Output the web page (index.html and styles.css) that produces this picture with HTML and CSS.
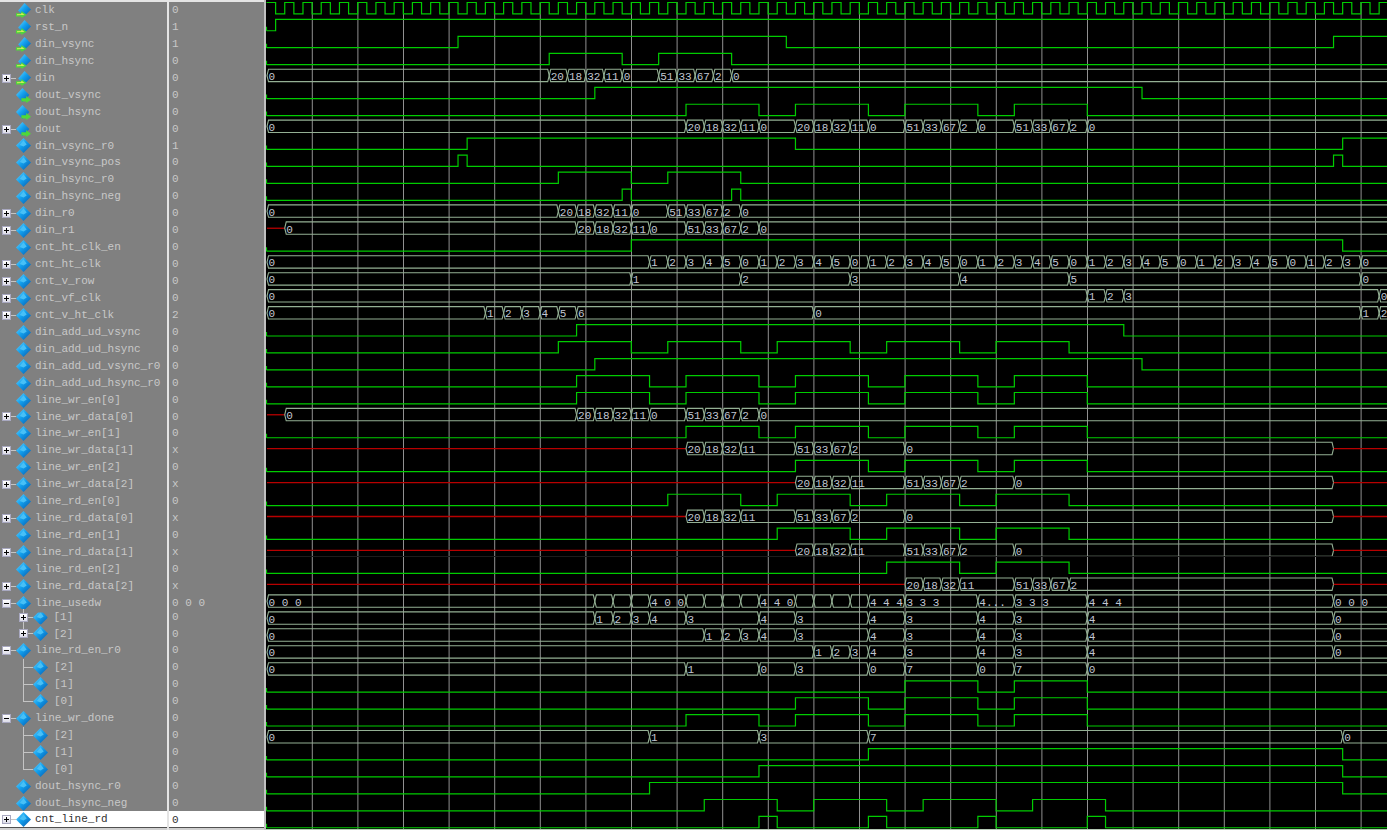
FILE: index.html
```html
<!DOCTYPE html>
<html>
<head>
  <title>Wave</title>
  <link rel="stylesheet" href="styles.css">
</head>
<body>
  <svg class="defs" width="0" height="0">
    <defs>
      <linearGradient id="blue" x1="0" y1="0" x2="1" y2="1">
        <stop offset="0" stop-color="#6fd6ff"/>
        <stop offset="0.45" stop-color="#12a0ee"/>
        <stop offset="1" stop-color="#0658ac"/>
      </linearGradient>
      <symbol id="sig" viewBox="0 0 14 14">
        <path d="M7 0 14 7 7 14 0 7Z" fill="url(#blue)"/>
        <path d="M7 2 10 6 7 8 3.5 6.5Z" fill="#48c0f6"/>
      </symbol>
      <symbol id="sig-in" viewBox="0 0 14 14">
        <path d="M8 0 14 6 7.5 12.5 2 7Z" fill="url(#blue)"/>
        <path d="M0 9.5H5V7.5L10 11 5 14V12.5H0Z" fill="#4fd83a"/>
        <path d="M1 10.5H5V9L8 11 1 11.5Z" fill="#e6f060"/>
      </symbol>
      <symbol id="sig-out" viewBox="0 0 14 14">
        <path d="M6 0 12.5 6.5 6 13 0 6.5Z" fill="url(#blue)"/>
        <path d="M5 9.5H9.5V7.5L14 11 9.5 14V12.5H5Z" fill="#4fd83a"/>
      </symbol>
    </defs>
  </svg>

  <div class="window">
    <div class="signals">
      <div class="row"><div class="name"><svg class="ico"><use href="#sig-in"/></svg><span>clk</span></div><div class="val">0</div></div>
      <div class="row"><div class="name"><svg class="ico"><use href="#sig-in"/></svg><span>rst_n</span></div><div class="val">1</div></div>
      <div class="row"><div class="name"><svg class="ico"><use href="#sig-in"/></svg><span>din_vsync</span></div><div class="val">1</div></div>
      <div class="row"><div class="name"><svg class="ico"><use href="#sig-in"/></svg><span>din_hsync</span></div><div class="val">0</div></div>
      <div class="row"><div class="name"><i class="btn"></i><i class="stem"></i><svg class="ico"><use href="#sig-in"/></svg><span>din</span></div><div class="val">0</div></div>
      <div class="row"><div class="name"><svg class="ico"><use href="#sig-out"/></svg><span>dout_vsync</span></div><div class="val">0</div></div>
      <div class="row"><div class="name"><svg class="ico"><use href="#sig-out"/></svg><span>dout_hsync</span></div><div class="val">0</div></div>
      <div class="row"><div class="name"><i class="btn"></i><i class="stem"></i><svg class="ico"><use href="#sig-out"/></svg><span>dout</span></div><div class="val">0</div></div>
      <div class="row"><div class="name"><svg class="ico"><use href="#sig"/></svg><span>din_vsync_r0</span></div><div class="val">1</div></div>
      <div class="row"><div class="name"><svg class="ico"><use href="#sig"/></svg><span>din_vsync_pos</span></div><div class="val">0</div></div>
      <div class="row"><div class="name"><svg class="ico"><use href="#sig"/></svg><span>din_hsync_r0</span></div><div class="val">0</div></div>
      <div class="row"><div class="name"><svg class="ico"><use href="#sig"/></svg><span>din_hsync_neg</span></div><div class="val">0</div></div>
      <div class="row"><div class="name"><i class="btn"></i><i class="stem"></i><svg class="ico"><use href="#sig"/></svg><span>din_r0</span></div><div class="val">0</div></div>
      <div class="row"><div class="name"><i class="btn"></i><i class="stem"></i><svg class="ico"><use href="#sig"/></svg><span>din_r1</span></div><div class="val">0</div></div>
      <div class="row"><div class="name"><svg class="ico"><use href="#sig"/></svg><span>cnt_ht_clk_en</span></div><div class="val">0</div></div>
      <div class="row"><div class="name"><i class="btn"></i><i class="stem"></i><svg class="ico"><use href="#sig"/></svg><span>cnt_ht_clk</span></div><div class="val">0</div></div>
      <div class="row"><div class="name"><i class="btn"></i><i class="stem"></i><svg class="ico"><use href="#sig"/></svg><span>cnt_v_row</span></div><div class="val">0</div></div>
      <div class="row"><div class="name"><i class="btn"></i><i class="stem"></i><svg class="ico"><use href="#sig"/></svg><span>cnt_vf_clk</span></div><div class="val">0</div></div>
      <div class="row"><div class="name"><i class="btn"></i><i class="stem"></i><svg class="ico"><use href="#sig"/></svg><span>cnt_v_ht_clk</span></div><div class="val">2</div></div>
      <div class="row"><div class="name"><svg class="ico"><use href="#sig"/></svg><span>din_add_ud_vsync</span></div><div class="val">0</div></div>
      <div class="row"><div class="name"><svg class="ico"><use href="#sig"/></svg><span>din_add_ud_hsync</span></div><div class="val">0</div></div>
      <div class="row"><div class="name"><svg class="ico"><use href="#sig"/></svg><span>din_add_ud_vsync_r0</span></div><div class="val">0</div></div>
      <div class="row"><div class="name"><svg class="ico"><use href="#sig"/></svg><span>din_add_ud_hsync_r0</span></div><div class="val">0</div></div>
      <div class="row"><div class="name"><svg class="ico"><use href="#sig"/></svg><span>line_wr_en[0]</span></div><div class="val">0</div></div>
      <div class="row"><div class="name"><i class="btn"></i><i class="stem"></i><svg class="ico"><use href="#sig"/></svg><span>line_wr_data[0]</span></div><div class="val">0</div></div>
      <div class="row"><div class="name"><svg class="ico"><use href="#sig"/></svg><span>line_wr_en[1]</span></div><div class="val">0</div></div>
      <div class="row"><div class="name"><i class="btn"></i><i class="stem"></i><svg class="ico"><use href="#sig"/></svg><span>line_wr_data[1]</span></div><div class="val">x</div></div>
      <div class="row"><div class="name"><svg class="ico"><use href="#sig"/></svg><span>line_wr_en[2]</span></div><div class="val">0</div></div>
      <div class="row"><div class="name"><i class="btn"></i><i class="stem"></i><svg class="ico"><use href="#sig"/></svg><span>line_wr_data[2]</span></div><div class="val">x</div></div>
      <div class="row"><div class="name"><svg class="ico"><use href="#sig"/></svg><span>line_rd_en[0]</span></div><div class="val">0</div></div>
      <div class="row"><div class="name"><i class="btn"></i><i class="stem"></i><svg class="ico"><use href="#sig"/></svg><span>line_rd_data[0]</span></div><div class="val">x</div></div>
      <div class="row"><div class="name"><svg class="ico"><use href="#sig"/></svg><span>line_rd_en[1]</span></div><div class="val">0</div></div>
      <div class="row"><div class="name"><i class="btn"></i><i class="stem"></i><svg class="ico"><use href="#sig"/></svg><span>line_rd_data[1]</span></div><div class="val">x</div></div>
      <div class="row"><div class="name"><svg class="ico"><use href="#sig"/></svg><span>line_rd_en[2]</span></div><div class="val">0</div></div>
      <div class="row"><div class="name"><i class="btn"></i><i class="stem"></i><svg class="ico"><use href="#sig"/></svg><span>line_rd_data[2]</span></div><div class="val">x</div></div>
      <div class="row"><div class="name"><i class="btn minus"></i><i class="stem"></i><svg class="ico"><use href="#sig"/></svg><span>line_usedw</span></div><div class="val">0 0 0</div></div>

      <div class="row shifted"><div class="name sub"><i class="tee"><i class="btn"></i></i><svg class="ico cut"><use href="#sig"/></svg><span>[1]</span></div><div class="val">0</div></div>
      <div class="row"><div class="name sub"><i class="tee end"><i class="btn"></i></i><svg class="ico"><use href="#sig"/></svg><span>[2]</span></div><div class="val">0</div></div>
      <div class="row"><div class="name"><i class="btn minus"></i><i class="stem"></i><svg class="ico"><use href="#sig"/></svg><span>line_rd_en_r0</span></div><div class="val">0</div></div>
      <div class="row"><div class="name sub"><i class="tee"></i><svg class="ico"><use href="#sig"/></svg><span>[2]</span></div><div class="val">0</div></div>
      <div class="row"><div class="name sub"><i class="tee"></i><svg class="ico"><use href="#sig"/></svg><span>[1]</span></div><div class="val">0</div></div>
      <div class="row"><div class="name sub"><i class="tee end"></i><svg class="ico"><use href="#sig"/></svg><span>[0]</span></div><div class="val">0</div></div>
      <div class="row"><div class="name"><i class="btn minus"></i><i class="stem"></i><svg class="ico"><use href="#sig"/></svg><span>line_wr_done</span></div><div class="val">0</div></div>
      <div class="row"><div class="name sub"><i class="tee"></i><svg class="ico"><use href="#sig"/></svg><span>[2]</span></div><div class="val">0</div></div>
      <div class="row"><div class="name sub"><i class="tee"></i><svg class="ico"><use href="#sig"/></svg><span>[1]</span></div><div class="val">0</div></div>
      <div class="row"><div class="name sub"><i class="tee end"></i><svg class="ico"><use href="#sig"/></svg><span>[0]</span></div><div class="val">0</div></div>
      <div class="row"><div class="name"><svg class="ico"><use href="#sig"/></svg><span>dout_hsync_r0</span></div><div class="val">0</div></div>
      <div class="row"><div class="name"><svg class="ico"><use href="#sig"/></svg><span>dout_hsync_neg</span></div><div class="val">0</div></div>
      <div class="row selected"><div class="name"><i class="btn"></i><i class="stem"></i><svg class="ico"><use href="#sig"/></svg><span>cnt_line_rd</span></div><div class="val">0</div></div>
      <div class="scrollbars"><div></div><div></div></div>
    </div>

    <div class="waves">
      <svg id="wave" width="1121" height="830"></svg>
    </div>
  </div>

  <script src="wave.js"></script>
</body>
</html>
```

FILE: styles.css
```css
html, body {
  margin: 0;
  height: 830px;
  overflow: hidden;
  background: #808080;
}
.defs {
  display: block;
  height: 0;
}
.window {
  display: flex;
  height: 830px;
}

/* left side: names and values */
.signals {
  width: 264px;
  flex: none;
  padding-top: 2px;
  background: #e4e4e4;
  overflow: hidden;
  font-family: "Liberation Mono", monospace;
  font-size: 11px;
  color: #c8c8c8;
}
.row {
  display: grid;
  grid-template-columns: 167px 95px;
  column-gap: 2px;
  height: 16.95px;
  line-height: 16.95px;
}
.row.shifted {
  margin-top: -3.2px;
}
.name, .val {
  background: #808080;
  white-space: pre;
  overflow: hidden;
}
.name {
  display: flex;
  align-items: center;
  padding-left: 15.5px;
}
.name:has(.btn) {
  padding-left: 2px;
}
.name.sub {
  padding-left: 23px;
}
.val {
  padding-left: 3px;
}
.row.selected {
  margin-top: -1px;
  height: 16.5px;
}
.selected .name, .selected .val {
  box-sizing: border-box;
  padding-top: 1px;
  background: #fff;
  color: #303030;
}
.scrollbars {
  display: grid;
  grid-template-columns: 167px 95px;
  column-gap: 2px;
  height: 4px;
}
.scrollbars div {
  background: #d0d0d0;
  border-top: 1px solid #505050;
}

.ico {
  width: 15px;
  height: 15px;
  flex: none;
  margin-right: 4.5px;
}
.sub .ico {
  margin-right: 6px;
}
.name:has(.btn) .ico {
  margin-left: -0.5px;
}
.ico.cut {
  clip-path: inset(3px 0 0 0);
}
.btn {
  display: block;
  width: 7px;
  height: 7px;
  flex: none;
  border: 1px solid #a8a8c0;
  background:
    linear-gradient(#000, #000) center / 5px 1px no-repeat,
    linear-gradient(#000, #000) center / 1px 5px no-repeat,
    linear-gradient(#fff, #dcdce8);
}
.btn.minus {
  background:
    linear-gradient(#000, #000) center / 5px 1px no-repeat,
    linear-gradient(#fff, #dcdce8);
}
.stem {
  display: block;
  width: 5px;
  height: 1px;
  flex: none;
  background: #c4c4c4;
}
.tee {
  display: flex;
  align-items: center;
  width: 10px;
  height: 100%;
  flex: none;
  background:
    linear-gradient(#c4c4c4, #c4c4c4) left top / 1px 100% no-repeat,
    linear-gradient(#c4c4c4, #c4c4c4) left center / 100% 1px no-repeat;
}
.tee.end {
  background-size: 1px 50%, 100% 1px;
}
.tee .btn {
  margin-left: -4px;
}

/* right side: the traces */
.waves {
  flex: 1;
  min-width: 0;
  background: #000;
  border-left: 2px solid #c0c0c0;
  overflow: hidden;
}
#wave {
  display: block;
}
.grid {
  stroke: #909090;
  stroke-width: 1;
}
.wire {
  fill: none;
  stroke: #00cc00;
  stroke-width: 1.2;
}
.bus {
  fill: none;
  stroke: #94b094;
  stroke-width: 1.1;
}
.unknown {
  stroke: #b80000;
  stroke-width: 1.3;
}
.bus-text {
  font-family: "Liberation Mono", monospace;
  font-size: 11px;
  fill: #c2c6d2;
  white-space: pre;
}
```

FILE: wave.js
```js
// one time step = half a clk period
const STEP = 9.12;
const PITCH = 16.957;
const WIDTH = 1125;

function tx(t) { return 0.5 + t * STEP; }
function lowY(i) { return 13.8 + i * PITCH; }

const en = [34, 42, 46, 54, 58, 66, 70, 78, 82, 90];
const data1 = [[46, "20"], [48, "18"], [50, "32"], [52, "11"], [58, "51"], [60, "33"], [62, "67"], [64, "2"], [70, "0"], [117, "x"]];
const data2 = [[58, "20"], [60, "18"], [62, "32"], [64, "11"], [70, "51"], [72, "33"], [74, "67"], [76, "2"], [82, "0"], [117, "x"]];

let clk = [];
for (let t = 1; t < 125; t++) clk.push(t);

let htClk = [[0, "0"]];
for (let t = 42; t <= 118; t += 2) htClk.push([t, String(((t - 42) / 2) % 6 + 1)]);
htClk = htClk.map(s => s[1] === "6" ? [s[0], "0"] : s);
htClk.push([120, "0"]);

const tail = [[66, "4"], [70, "3"], [78, "4"], [82, "3"], [90, "4"], [117, "0"]];

// numbers are the edges of a wire, arrays of [t, value] are a bus
const rows = [
  { w: clk, hi: true },
  { w: [1] },
  { w: [21, 57, 117] },
  { w: [31, 39, 43, 51] },
  { b: [[0, "0"], [31, "20"], [33, "18"], [35, "32"], [37, "11"], [39, "0"], [43, "51"], [45, "33"], [47, "67"], [49, "2"], [51, "0"]] },
  { w: [36, 96] },
  { w: [46, 54, 58, 66, 70, 78, 82, 90] },
  { b: [[0, "0"], [46, "20"], [48, "18"], [50, "32"], [52, "11"], [54, "0"], [58, "20"], [60, "18"], [62, "32"], [64, "11"], [66, "0"], [70, "51"], [72, "33"], [74, "67"], [76, "2"], [78, "0"], [82, "51"], [84, "33"], [86, "67"], [88, "2"], [90, "0"]] },
  { w: [22, 58, 118] },
  { w: [21, 22, 117, 118] },
  { w: [32, 40, 44, 52] },
  { w: [39, 40, 51, 52] },
  { b: [[0, "0"], [32, "20"], [34, "18"], [36, "32"], [38, "11"], [40, "0"], [44, "51"], [46, "33"], [48, "67"], [50, "2"], [52, "0"]] },
  { b: [[0, "x"], [2, "0"], [34, "20"], [36, "18"], [38, "32"], [40, "11"], [42, "0"], [46, "51"], [48, "33"], [50, "67"], [52, "2"], [54, "0"]] },
  { w: [40, 118] },
  { b: htClk },
  { b: [[0, "0"], [40, "1"], [52, "2"], [64, "3"], [76, "4"], [88, "5"], [120, "0"]] },
  { b: [[0, "0"], [90, "1"], [92, "2"], [94, "3"], [122, "0"]] },
  { b: [[0, "0"], [24, "1"], [26, "2"], [28, "3"], [30, "4"], [32, "5"], [34, "6"], [60, "0"], [120, "1"], [122, "2"]] },
  { w: [34, 94] },
  { w: [32, 40, 44, 52, 56, 64, 68, 76, 80, 88] },
  { w: [36, 96] },
  { w: en },
  { w: en },
  { b: [[0, "x"], [2, "0"], [34, "20"], [36, "18"], [38, "32"], [40, "11"], [42, "0"], [46, "51"], [48, "33"], [50, "67"], [52, "2"], [54, "0"]] },
  { w: en.slice(2) },
  { b: [[0, "x"]].concat(data1) },
  { w: en.slice(4) },
  { b: [[0, "x"]].concat(data2) },
  { w: [44, 52, 56, 64, 68, 76, 80, 88] },
  { b: [[0, "x"]].concat(data1) },
  { w: [56, 64, 68, 76, 80, 88] },
  { b: [[0, "x"]].concat(data2) },
  { w: [68, 76, 80, 88] },
  { b: [[0, "x"], [70, "20"], [72, "18"], [74, "32"], [76, "11"], [82, "51"], [84, "33"], [86, "67"], [88, "2"], [117, "x"]] },
  { b: [[0, "0 0 0"], [36, ""], [38, ""], [40, ""], [42, "4 0 0"], [46, ""], [48, ""], [50, ""], [52, ""], [54, "4 4 0"], [58, ""], [60, ""], [62, ""], [64, ""], [66, "4 4 4"], [70, "3 3 3"], [78, "4..."], [82, "3 3 3"], [90, "4 4 4"], [117, "0 0 0"]] },
  { b: [[0, "0"], [36, "1"], [38, "2"], [40, "3"], [42, "4"], [46, "3"], [54, "4"], [58, "3"]].concat(tail) },
  { b: [[0, "0"], [48, "1"], [50, "2"], [52, "3"], [54, "4"], [58, "3"]].concat(tail) },
  { b: [[0, "0"], [60, "1"], [62, "2"], [64, "3"]].concat(tail) },
  { b: [[0, "0"], [46, "1"], [54, "0"], [58, "3"], [66, "0"], [70, "7"], [78, "0"], [82, "7"], [90, "0"]] },
  { w: [70, 78, 82, 90] },
  { w: [58, 66, 70, 78, 82, 90] },
  { w: [46, 54, 58, 66, 70, 78, 82, 90] },
  { b: [[0, "0"], [42, "1"], [54, "3"], [66, "7"], [118, "0"]] },
  { w: [66, 118] },
  { w: [54, 118] },
  { w: [42, 118] },
  { w: [48, 56, 60, 68, 72, 80, 84, 92] },
  { w: [54, 56, 66, 68, 78, 80, 90, 92] }
];

const svg = document.getElementById("wave");
const NS = "http://www.w3.org/2000/svg";

function add(tag, cls, attrs, text) {
  const el = document.createElementNS(NS, tag);
  el.setAttribute("class", cls);
  for (const k in attrs) el.setAttribute(k, attrs[k]);
  if (text) el.textContent = text;
  svg.appendChild(el);
}

// grid every 5 steps
for (let k = 1; k <= 24; k++) {
  const x = tx(k * 5) + 0.2;
  add("line", "grid", { x1: x, x2: x, y1: 2, y2: 830 });
}

function drawWire(row, i) {
  const low = lowY(i);
  const high = low - 11.3;
  let lvl = row.hi ? high : low;
  let d = "M0.5 " + lvl;
  row.w.forEach(t => {
    if (tx(t) > WIDTH) return;
    d += "H" + tx(t);
    lvl = lvl === low ? high : low;
    d += "V" + lvl;
  });
  d += "H" + WIDTH;
  add("path", "wire", { d: d });
  if (!row.hi) add("path", "wire", { d: "M0.5 " + low + "v-4" });
}

function drawBus(row, i) {
  const low = lowY(i);
  const top = low - 12.4;
  const mid = low - 6;
  const segs = row.b;
  segs.forEach((s, n) => {
    const x0 = n === 0 ? 1 : tx(s[0]);
    const x1 = n + 1 < segs.length ? tx(segs[n + 1][0]) : WIDTH + 5;
    if (s[1] === "x") {
      add("line", "unknown", { x1: x0, x2: x1, y1: mid, y2: mid });
      return;
    }
    add("path", "bus", {
      d: "M" + x0 + " " + mid + "L" + (x0 + 1.5) + " " + top + "H" + (x1 - 1.5) +
         "L" + x1 + " " + mid + "L" + (x1 - 1.5) + " " + low + "H" + (x0 + 1.5) + "Z"
    });
    add("text", "bus-text", { x: x0 + 1.5, y: low - 1.7 }, s[1]);
  });
}

rows.forEach((row, i) => {
  if (row.w) drawWire(row, i);
  else drawBus(row, i);
});

// seam across the picture
add("line", "grid", { x1: 0, x2: WIDTH, y1: 556.5, y2: 556.5, style: "stroke:#1c1c1c" });
// bottom edge
add("line", "grid", { x1: 0, x2: WIDTH, y1: 829.5, y2: 829.5, style: "stroke:#b4c8b4" });
```
